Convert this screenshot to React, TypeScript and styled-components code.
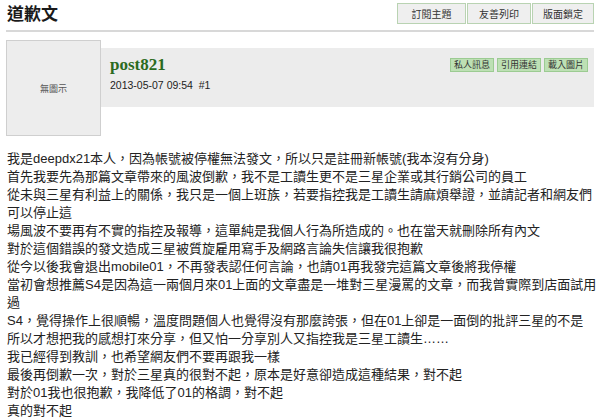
import React from "react";
import styled, { createGlobalStyle } from "styled-components";

const GlobalStyle = createGlobalStyle`
  html, body { margin: 0; padding: 0; background: #ffffff; }
  body { font-family: "Liberation Sans", "Noto Sans CJK TC", sans-serif; color: #222; }
`;

const Page = styled.div`
  width: 588px;
  padding: 3px 6px 0 6px;
`;

const TopBar = styled.div`
  display: flex;
  justify-content: space-between;
  align-items: flex-start;
  padding-bottom: 6px;
  border-bottom: 2px solid #d8d8d8;
`;

const Title = styled.h1`
  margin: 0;
  padding-left: 1px;
  font-family: "Noto Sans CJK TC", sans-serif;
  font-size: 17px;
  line-height: 20px;
  font-weight: 700;
  color: #1a1a1a;
`;

const TopActions = styled.div`
  display: flex;
  gap: 1px;
`;

const TopButton = styled.button<{ $w: number }>`
  width: ${(p) => p.$w}px;
  height: 21px;
  padding: 0;
  border: 1px solid #b9d3b2;
  background: #efefef;
  font-family: "Noto Sans CJK TC", sans-serif;
  font-size: 10px;
  color: #333;
  cursor: pointer;
`;

const PostHead = styled.div`
  display: flex;
  align-items: flex-start;
  margin-top: 8px;
`;

const Avatar = styled.div`
  width: 93px;
  height: 94px;
  box-sizing: content-box;
  border: 1px solid #cfcfcf;
  background: #ededed;
  display: flex;
  align-items: center;
  justify-content: center;
  font-family: "Noto Sans CJK TC", sans-serif;
  font-size: 9px;
  color: #555;
  flex-shrink: 0;
`;

const InfoBand = styled.div`
  flex: 1;
  height: 59px;
  margin-top: 8px;
  background: #ececec;
  display: flex;
  justify-content: space-between;
  align-items: flex-start;
  padding: 0 6px 0 9px;
`;

const UserInfo = styled.div`
  display: flex;
  flex-direction: column;
  padding-top: 8px;
`;

const UserName = styled.a`
  font-family: "Liberation Serif", serif;
  font-weight: 700;
  font-size: 17px;
  line-height: 18px;
  color: #2b6a20;
  text-decoration: none;
`;

const PostDate = styled.div`
  margin-top: 5px;
  font-family: "Liberation Sans", sans-serif;
  font-size: 10.5px;
  line-height: 12px;
  color: #222;
  white-space: pre;
`;

const PostActions = styled.div`
  display: flex;
  gap: 3px;
  margin-top: 10px;
`;

const SmallButton = styled.button`
  height: 14px;
  padding: 0 3px;
  border: 1px solid #9ccb92;
  background: #bde0b4;
  font-family: "Noto Sans CJK TC", sans-serif;
  font-size: 9px;
  line-height: 12px;
  color: #333;
  cursor: pointer;
`;

const Body = styled.div`
  margin-top: 14px;
  padding-left: 1px;
  font-family: "Liberation Sans", "Noto Sans CJK TC", sans-serif;
  font-size: 13px;
  line-height: 18px;
  color: #222;
  white-space: nowrap;
`;

const Line = styled.div``;

const lines = [
  "我是deepdx21本人，因為帳號被停權無法發文，所以只是註冊新帳號(我本沒有分身)",
  "首先我要先為那篇文章帶來的風波倒歉，我不是工讀生更不是三星企業或其行銷公司的員工",
  "從未與三星有利益上的關係，我只是一個上班族，若要指控我是工讀生請麻煩舉證，並請記者和網友們",
  "可以停止這",
  "場風波不要再有不實的指控及報導，這單純是我個人行為所造成的。也在當天就刪除所有內文",
  "對於這個錯誤的發文造成三星被質旋雇用寫手及網路言論失信讓我很抱歉",
  "從今以後我會退出mobile01，不再發表認任何言論，也請01再我發完這篇文章後將我停權",
  "當初會想推薦S4是因為這一兩個月來01上面的文章盡是一堆對三星漫罵的文章，而我曾實際到店面試用",
  "過",
  "S4，覺得操作上很順暢，溫度問題個人也覺得沒有那麼誇張，但在01上卻是一面倒的批評三星的不是",
  "所以才想把我的感想打來分享，但又怕一分享別人又指控我是三星工讀生……",
  "我已經得到教訓，也希望網友們不要再跟我一樣",
  "最後再倒歉一次，對於三星真的很對不起，原本是好意卻造成這種結果，對不起",
  "對於01我也很抱歉，我降低了01的格調，對不起",
  "真的對不起",
];

export default function App() {
  return (
    <>
      <GlobalStyle />
      <Page>
        <TopBar>
          <Title>道歉文</Title>
          <TopActions>
            <TopButton $w={69}>訂閱主題</TopButton>
            <TopButton $w={64}>友善列印</TopButton>
            <TopButton $w={62}>版面鎖定</TopButton>
          </TopActions>
        </TopBar>
        <PostHead>
          <Avatar>無圖示</Avatar>
          <InfoBand>
            <UserInfo>
              <UserName href="#">post821</UserName>
              <PostDate>{"2013-05-07 09:54  #1"}</PostDate>
            </UserInfo>
            <PostActions>
              <SmallButton>私人訊息</SmallButton>
              <SmallButton>引用連結</SmallButton>
              <SmallButton>載入圖片</SmallButton>
            </PostActions>
          </InfoBand>
        </PostHead>
        <Body>
          {lines.map((l, i) => (
            <Line key={i}>{l}</Line>
          ))}
        </Body>
      </Page>
    </>
  );
}
